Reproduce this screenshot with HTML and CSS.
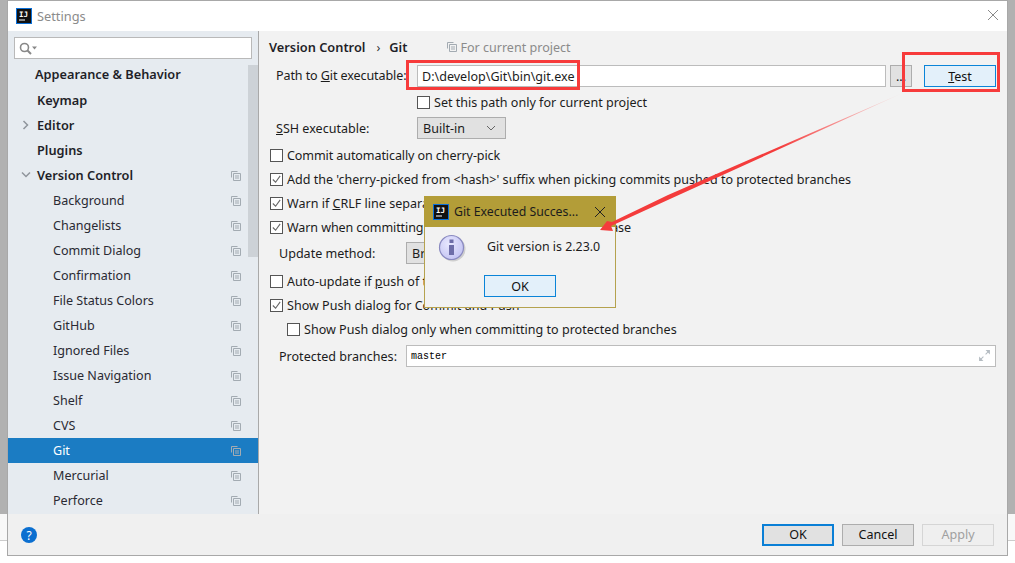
FILE: index.html
```html
<!DOCTYPE html>
<html lang="en">
<head>
<meta charset="utf-8">
<title>Settings</title>
<link rel="stylesheet" href="styles.css">
</head>
<body>
<div class="window">
  <header class="titlebar">
    <svg class="app-icon" viewBox="0 0 16 16"><rect x=".5" y=".5" width="15" height="15" fill="#111" stroke="#0a6fd8"/><text x="3" y="9" class="ij">IJ</text><rect x="3" y="11.5" width="6" height="1" fill="#fff"/></svg>
    <span class="title">Settings</span>
    <svg class="close" viewBox="0 0 12 12"><path d="M1 1l10 10M11 1L1 11" stroke="#8a8a8a" fill="none"/></svg>
  </header>
  <div class="main">
    <aside class="sidebar">
      <div class="search">
        <svg class="search-icon" viewBox="0 0 18 13"><circle cx="5.500" cy="5.500" r="4" fill="none" stroke="#888" stroke-width="1.6"/><path d="M8.500 8.500l3.500 3.500" stroke="#888" stroke-width="2"/><path d="M13 4.500h5l-2.500 3z" fill="#888"/></svg>
      </div>
      <div class="tree-wrap">
        <ul class="tree">
          <li class="row top first">Appearance &amp; Behavior</li>
          <li class="row top k">Keymap</li>
          <li class="row top arrow"><svg class="chev" viewBox="0 0 8 10"><path d="M1.500 1l4 4-4 4" fill="none" stroke="#8f959b" stroke-width="1.5"/></svg>Editor</li>
          <li class="row top k">Plugins</li>
          <li class="row top arrow"><svg class="chev" viewBox="0 0 10 8"><path d="M1 1.500l4 4 4-4" fill="none" stroke="#8f959b" stroke-width="1.5"/></svg>Version Control<svg class="copy"><use href="#copy"/></svg></li>
          <li class="row sub">Background<svg class="copy"><use href="#copy"/></svg></li>
          <li class="row sub">Changelists<svg class="copy"><use href="#copy"/></svg></li>
          <li class="row sub">Commit Dialog<svg class="copy"><use href="#copy"/></svg></li>
          <li class="row sub">Confirmation<svg class="copy"><use href="#copy"/></svg></li>
          <li class="row sub">File Status Colors<svg class="copy"><use href="#copy"/></svg></li>
          <li class="row sub">GitHub<svg class="copy"><use href="#copy"/></svg></li>
          <li class="row sub">Ignored Files<svg class="copy"><use href="#copy"/></svg></li>
          <li class="row sub">Issue Navigation<svg class="copy"><use href="#copy"/></svg></li>
          <li class="row sub">Shelf<svg class="copy"><use href="#copy"/></svg></li>
          <li class="row sub">CVS<svg class="copy"><use href="#copy"/></svg></li>
          <li class="row sub selected">Git<svg class="copy"><use href="#copy"/></svg></li>
          <li class="row sub">Mercurial<svg class="copy"><use href="#copy"/></svg></li>
          <li class="row sub">Perforce<svg class="copy"><use href="#copy"/></svg></li>
        </ul>
        <div class="scrollbar"></div>
      </div>
    </aside>
    <section class="content">
      <div class="crumbs"><b>Version Control</b><span class="sep">›</span><b>Git</b><svg class="copy crumb-copy"><use href="#copy"/></svg><span class="muted">For current project</span></div>
      <div class="path-row">
        <label class="path-label">Path to <u>G</u>it executable:</label>
        <div class="input path-input"><span>D:\develop\Git\bin\git.exe</span></div>
        <button class="btn browse">...</button>
        <button class="btn test"><u>T</u>est</button>
      </div>
      <div class="check-row path-only"><span class="box"></span><span>Set this path only for current project</span></div>
      <div class="ssh-row"><label class="ssh-label"><u>S</u>SH executable:</label><div class="select ssh-select">Built-in<svg class="sel-chev" viewBox="0 0 10 6"><path d="M1 1l4 4 4-4" fill="none" stroke="#666"/></svg></div></div>
      <div class="check-row cb first-cb"><span class="box"></span><span class="tight">Commit automatically on cherry-pick</span></div>
      <div class="check-row cb"><span class="box on"><svg viewBox="0 0 12 12"><path d="M2 6l3 3 5-7" fill="none" stroke="#666" stroke-width="1.2"/></svg></span><span>Add the 'cherry-picked from &lt;hash&gt;' suffix when picking commits pushed to protected branches</span></div>
      <div class="check-row cb"><span class="box on"><svg viewBox="0 0 12 12"><path d="M2 6l3 3 5-7" fill="none" stroke="#666" stroke-width="1.2"/></svg></span><span>Warn if <u>C</u>RLF line separators are about to be committed</span></div>
      <div class="check-row cb"><span class="box on"><svg viewBox="0 0 12 12"><path d="M2 6l3 3 5-7" fill="none" stroke="#666" stroke-width="1.2"/></svg></span><span class="tight">Warn when committing in detached HEAD or during rebase</span></div>
      <div class="update-row"><label class="update-label">Update method:</label><div class="select update-select">Branch default</div></div>
      <div class="check-row cb"><span class="box"></span><span>Auto-update if <u>p</u>ush of the current branch was rejected</span></div>
      <div class="check-row cb"><span class="box on"><svg viewBox="0 0 12 12"><path d="M2 6l3 3 5-7" fill="none" stroke="#666" stroke-width="1.2"/></svg></span><span>Show Push dialog for Commit and Push</span></div>
      <div class="check-row cb nested"><span class="box"></span><span>Show Push dialog only when committing to protected branches</span></div>
      <div class="protected-row"><label class="update-label">Protected branches:</label><div class="input protected"><span class="mono">master</span><svg class="expand" viewBox="0 0 12 12"><path d="M7 1h4v4zM1 11V7l4 4z" fill="#b5bcc2"/><path d="M10 2L7 5M2 10l3-3" stroke="#b5bcc2"/></svg></div></div>
    </section>
  </div>
  <footer class="footer">
    <svg class="help" viewBox="0 0 16 16"><circle cx="8" cy="8" r="8" fill="#0b6fd0"/><text x="8" y="12.5" class="q">?</text></svg>
    <div class="actions">
      <button class="btn fbtn default">OK</button>
      <button class="btn fbtn">Cancel</button>
      <button class="btn fbtn disabled">Apply</button>
    </div>
  </footer>
</div>

<div class="redbox red-path"></div>
<div class="redbox red-test"></div>

<div class="popup">
  <div class="popup-title">
    <svg class="app-icon" viewBox="0 0 16 16"><rect x=".5" y=".5" width="15" height="15" fill="#111" stroke="#0a6fd8"/><text x="3" y="9" class="ij">IJ</text><rect x="3" y="11.5" width="6" height="1" fill="#fff"/></svg>
    <span class="popup-name">Git Executed Succes...</span>
    <svg class="popup-close" viewBox="0 0 12 12"><path d="M1 1l10 10M11 1L1 11" stroke="#222" fill="none"/></svg>
  </div>
  <div class="popup-body">
    <svg class="info" viewBox="0 0 30 30"><defs><radialGradient id="ig" cx=".4" cy=".35" r=".7"><stop offset="0" stop-color="#e8e8ff"/><stop offset="1" stop-color="#c3c3f2"/></radialGradient></defs><circle cx="15" cy="16" r="12.500" fill="#000" opacity=".15"/><circle cx="13.500" cy="14.500" r="12" fill="url(#ig)" stroke="#8a8ac0" stroke-width="1.2"/><rect x="11" y="12" width="5" height="10" fill="#6d6da8"/><rect x="11.500" y="6.500" width="4" height="3.500" fill="#6d6da8"/></svg>
    <span class="popup-msg">Git version is 2.23.0</span>
  </div>
  <div class="popup-actions"><button class="btn test popup-ok">OK</button></div>
</div>

<svg class="annotation" viewBox="0 0 1015 563">
  <defs><linearGradient id="fade" gradientUnits="userSpaceOnUse" x1="905" y1="92" x2="780" y2="150"><stop offset="0" stop-color="#ff3b3b" stop-opacity="0"/><stop offset="1" stop-color="#f43c3c"/></linearGradient></defs>
  <polygon points="905,92 668,195 612,222 607,221 600,230 613,231 611,226 670,199" fill="url(#fade)"/>
</svg>

<svg class="defs"><defs><symbol id="copy" viewBox="0 0 10 10"><path d="M.5 6.500v-6h6M2.500 2.500h7v7h-7zM4 5h4M4 7h4" fill="none" stroke="#a3abb2"/></symbol></defs></svg>
</body>
</html>
```
FILE: styles.css
```css
* { box-sizing: border-box; }
html, body { margin: 0; padding: 0; }
body {
  width: 1015px; height: 563px; overflow: hidden; position: relative;
  font-family: "Noto Sans", "Open Sans", sans-serif; font-size: 12.55px; color: #1c1c1c;
  background: linear-gradient(#b1b1b1 0 514px, #f8f8f8 514px 540px, #ccc 540px 541px, #fff 541px);
  padding: 0 0 0 7px;
}
.window {
  width: 1001px; height: 556px; background: #f2f2f2;
  border: 1px solid #a8a8a8; display: flex; flex-direction: column;
}
.titlebar { height: 30px; background: #fff; display: flex; align-items: center; padding: 0 8px; flex: none; }
.app-icon { width: 16px; height: 16px; flex: none; }
.ij { font: bold 7.5px "DejaVu Sans Mono", monospace; fill: #fff; }
.titlebar .app-icon { margin-right: 5px; }
.title { color: #8b8b8b; font-size: 12.8px; flex: 1; }
.close { width: 12px; height: 12px; margin-top: -2px; }
.main { flex: 1; display: flex; min-height: 0; }
.sidebar { width: 251px; background: #e6ebf0; border-right: 1px solid #a9a9a9; padding-top: 6px; flex: none; display: flex; flex-direction: column; }
.search { margin: 0 6px; height: 22px; width: 238px; background: #fff; border: 1px solid #b9b9b9; display: flex; align-items: center; padding-left: 4px; flex: none; }
.search-icon { width: 18px; height: 13px; }
.tree-wrap { position: relative; flex: 1; padding-top: 4px; overflow: hidden; }
.tree { list-style: none; margin: 0; padding: 0; }
.row { height: 25px; display: flex; align-items: center; position: relative; color: #2a2a33; }
.top { font-size: 12.75px; font-weight: 600; padding-left: 29px; padding-bottom: 2px; color: #1f1f28; }
.first { padding-left: 27px; padding-bottom: 4px; }
.k, .arrow { padding-left: 29px; }
.chev { position: absolute; left: 13px; top: 7px; width: 10px; height: 10px; }
.sub { padding-left: 45px; }
.selected { background: #1b7cc3; color: #fff; }
.copy { width: 10px; height: 10px; position: absolute; right: 17px; top: 8px; }
.scrollbar { position: absolute; top: 6px; right: 0; width: 10px; height: 192px; background: #cdd2d7; }
.content { flex: 1; padding-left: 10px; position: relative; min-width: 0; }
.crumbs { height: 34px; padding-bottom: 2px; display: flex; align-items: center; }
.crumbs b { font-size: 12.8px; font-weight: 600; color: #1f1f28; }
.sep { margin: 0 9px 0 11px; color: #333; }
.crumb-copy { position: static; margin: 0 3px 0 40px; }
.muted { color: #8b8b8b; }
.path-row { height: 22px; display: flex; align-items: center; padding-left: 7px; }
.path-label { width: 141px; flex: none; white-space: nowrap; margin-top: -1px; letter-spacing: -.1px; }
.input { background: #fff; border: 1px solid #bcbcbc; height: 22px; display: flex; align-items: center; position: relative; padding-left: 4px; }
.path-input { width: 469px; }
.btn { font: inherit; color: #111; border: 1px solid #adadad; background: #e1e1e1; padding: 0; height: 22px; }
.browse { width: 22px; margin-left: 4px; }
.test { width: 72px; margin-left: 12px; background: #e3f0fa; border-color: #0a84d8; }
.check-row { display: flex; align-items: center; white-space: nowrap; }
.tight { letter-spacing: -.1px; }
.box { width: 13px; height: 13px; border: 1px solid #555; background: #fff; margin-right: 4px; flex: none; display: block; }
.box svg { display: block; width: 11px; height: 11px; }
.path-only { height: 24px; padding-left: 148px; margin-top: 3px; }
.ssh-row { height: 24px; display: flex; align-items: center; padding-left: 7px; margin-top: 2px; }
.ssh-label { width: 141px; flex: none; }
.select { border: 1px solid #adadad; background: #e1e1e1; height: 22px; display: flex; align-items: center; padding-left: 5px; }
.ssh-select { width: 89px; position: relative; }
.sel-chev { position: absolute; right: 9px; top: 7px; width: 10px; height: 6px; }
.first-cb { margin-top: 3px; }
.cb { height: 24px; padding-left: 1px; }
.update-row { height: 28px; margin-bottom: 2px; display: flex; align-items: center; padding-left: 10px; }
.update-label { width: 127px; flex: none; white-space: nowrap; }
.update-select { width: 120px; white-space: nowrap; }
.nested { padding-left: 18px; }
.protected-row { display: flex; align-items: center; padding-left: 10px; margin-top: 3px; height: 24px; }
.protected { width: 590px; }
.mono { font: 10px "Liberation Mono", "DejaVu Sans Mono", monospace; color: #000; }
.expand { position: absolute; right: 4px; top: 3px; width: 13px; height: 13px; }
.footer { height: 41px; flex: none; display: flex; align-items: center; justify-content: space-between; padding: 0 13px; background: #f0f0f0; }
.help { width: 16px; height: 16px; }
.q { font: 12px "Noto Sans", sans-serif; fill: #fff; text-anchor: middle; }
.actions { display: flex; gap: 8px; }
.fbtn { width: 72px; }
.default { border: 2px solid #0a7fd6; }
.disabled { color: #a0a0a0; background: #efefef; border-color: #d5d5d5; }
.redbox { position: absolute; border: 3px solid #f73b3b; }
.red-path { left: 406px; top: 60px; width: 174px; height: 30px; }
.red-test { left: 902px; top: 52px; width: 98px; height: 40px; }
.popup { position: absolute; left: 424px; top: 196px; width: 192px; height: 112px; background: #f2f2f2; border: 1px solid #b5a24e; border-top: 0; }
.popup-title { height: 31px; margin: 0 -1px; background: #b39d38; display: flex; align-items: center; padding-left: 9px; }
.popup-name { margin-left: 5px; flex: 1; white-space: nowrap; font-size: 12.3px; }
.popup-close { width: 12px; height: 12px; margin-right: 10px; }
.popup-body { display: flex; align-items: center; height: 42px; padding-left: 13px; }
.info { width: 30px; height: 30px; flex: none; }
.popup-msg { margin-left: 19px; white-space: nowrap; margin-top: -4px; font-size: 12.4px; }
.popup-actions { display: flex; justify-content: center; padding-top: 6px; }
.popup-ok { margin: 0; }
.annotation { position: absolute; left: 0; top: 0; width: 1015px; height: 563px; pointer-events: none; }
.defs { position: absolute; width: 0; height: 0; }
```
